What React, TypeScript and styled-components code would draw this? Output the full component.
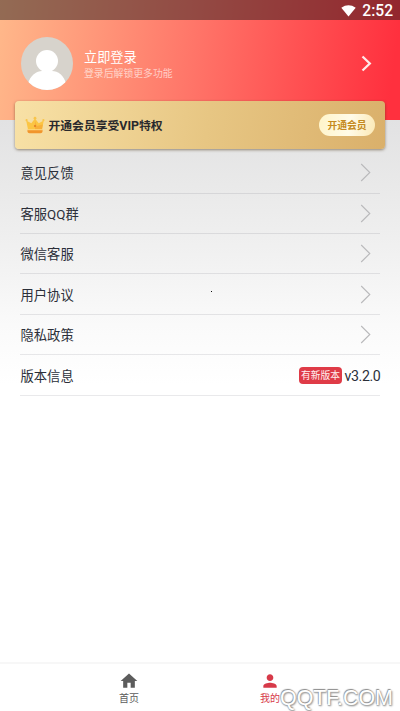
import React from "react";
import styled, { createGlobalStyle } from "styled-components";

const Global = createGlobalStyle`
  * { box-sizing: border-box; }
  body { margin: 0; background: #fff; font-family: Roboto, "Noto Sans CJK SC", sans-serif; }
`;

const Page = styled.div`
  position: relative;
  width: 400px;
  height: 711px;
  overflow: hidden;
  display: flex;
  flex-direction: column;
  background: linear-gradient(180deg, #e2e2e3 120px, #e9e9e9 185px, #f1f1f1 255px, #fafafa 325px, #fff 385px);
`;

const Header = styled.header`
  height: 120px;
  flex: none;
  background: linear-gradient(97deg, #ffb88a 0%, #ff7468 49%, #ff303e 97%);
`;

const StatusBar = styled.div`
  height: 20px;
  display: flex;
  align-items: center;
  justify-content: flex-end;
  gap: 6px;
  padding: 3px 7px 0 0;
  background: rgba(40, 30, 30, 0.5);
  color: #fff;
  font-size: 15.6px;
  font-weight: 500;
  line-height: 17px;

  svg {
    margin-top: -2px;
  }
`;

const Profile = styled.div`
  display: flex;
  align-items: center;
  height: 87px;
  padding: 0 28px 0 21px;
`;

const Greeting = styled.div`
  flex: 1;
  margin-left: 11px;
  color: #fff;
`;

const LoginTitle = styled.div`
  font-size: 13.2px;
  line-height: 18px;
  margin-top: 2px;
`;

const LoginHint = styled.div`
  font-size: 9.85px;
  line-height: 14px;
  color: rgba(255, 255, 255, 0.62);
`;

const VipCard = styled.section`
  height: 48px;
  flex: none;
  margin: -19px 15px 0;
  padding: 0 10px;
  display: flex;
  align-items: center;
  border-radius: 4px;
  background: linear-gradient(98deg, #f8e1a6 0%, #e7c683 52%, #dab06b 100%);
  box-shadow: 0 1px 3px rgba(70, 50, 20, 0.55);
`;

const VipText = styled.div`
  flex: 1;
  margin: -2px 0 0 3.5px;
  font-size: 11.8px;
  font-weight: 700;
  color: #29292d;
`;

const VipLatin = styled.span`
  font-size: 12.4px;
`;

const VipButton = styled.button`
  width: 56px;
  height: 22px;
  padding: 0;
  border: 0;
  border-radius: 11px;
  background: linear-gradient(100deg, #fff4c9, #fffbe8 55%, #fbe8b5);
  color: #c58a20;
  font: 700 9.8px/23px Roboto, "Noto Sans CJK SC", sans-serif;
`;

const Menu = styled.main`
  flex: 1;
  padding: 4.1px 20px 0;
`;

const Row = styled.div`
  height: 40.45px;
  display: flex;
  align-items: center;
  border-bottom: 1px solid rgba(40, 40, 60, 0.1);
  color: #2b2f39;
  font-size: 13.3px;
`;

const RowLabel = styled.span`
  flex: 1;
  margin-left: 0.5px;
`;

const RowArrow = styled.svg`
  margin-right: 9px;
`;

const UpdateTag = styled.span`
  width: 43px;
  height: 17px;
  margin-right: 2.5px;
  border-radius: 4px;
  background: #df3b47;
  color: #fff0f0;
  font-size: 9.8px;
  line-height: 18px;
  text-align: center;
`;

const Version = styled.span`
  width: 35.5px;
  padding-top: 1px;
  font-size: 14.2px;
  letter-spacing: -0.4px;
`;

const TabBar = styled.nav`
  height: 49px;
  flex: none;
  display: flex;
  justify-content: center;
  border-top: 2px solid #f7f7f7;
  background: #fff;
`;

const Tab = styled.div<{ $active?: boolean }>`
  width: 141px;
  padding: 7px 1px 0 0;
  display: flex;
  flex-direction: column;
  align-items: center;
  color: ${(p) => (p.$active ? "#d73a49" : "#5c5c5c")};
  font-size: 10px;
  line-height: 16px;

  svg {
    flex: none;
  }
`;

const Watermark = styled.div`
  position: absolute;
  left: 280px;
  top: 686px;
  font: 21.4px/24px "Liberation Sans", sans-serif;
  color: #fff;
  text-shadow: -0.5px -1px 1px #888, 0 1px 1px #aaa, 1px 1px 2px #888;
  white-space: nowrap;
`;

const Speck = styled.i`
  position: absolute;
  left: 211px;
  top: 291px;
  width: 1px;
  height: 1px;
  background: #111;
`;

const Avatar = () => (
  <svg width="52" height="53" viewBox="0 0 52 53">
    <defs>
      <clipPath id="avatar">
        <ellipse cx="26" cy="26.5" rx="26" ry="26.5" />
      </clipPath>
    </defs>
    <g clipPath="url(#avatar)">
      <rect width="52" height="53" fill="#d7d3cc" />
      <circle cx="26" cy="24" r="11" fill="#fff" />
      <path d="M7 53V47C9 38 16 34 21 34H31C37 34 43 38 45 47V53Z" fill="#fff" />
    </g>
  </svg>
);

const Crown = () => (
  <svg width="20" height="20" viewBox="0 0 20 20">
    <path d="M1.2 5.5L6.3 8.2L10 3.5L13.7 8.2L18.8 5.5L16.8 15.5H3.2Z" fill="#fbc544" />
    <path d="M10 6L11.8 11L17.8 9.5L16.8 15.5H10Z" fill="#f8b039" />
    <path d="M2.5 14.8H17.5V16.5Q17.5 18.2 15.5 18.2H4.5Q2.5 18.2 2.5 16.5Z" fill="#f1952d" />
    <path d="M3 14.3H17V15.2H3Z" fill="#ffe08a" />
    <circle cx="10" cy="3.2" r="1.4" fill="#f9c54b" />
    <circle cx="1.6" cy="5.2" r="1.1" fill="#f9c54b" />
    <circle cx="18.4" cy="5.2" r="1.1" fill="#f9c54b" />
    <path d="M10 9.7L11.1 11L10 12.3L8.9 11Z" fill="#dd6e22" />
  </svg>
);

const items = ["意见反馈", "客服QQ群", "微信客服", "用户协议", "隐私政策"];

export default function App() {
  return (
    <Page>
      <Global />
      <Header>
        <StatusBar>
          <svg width="15" height="12" viewBox="0 0 15 12">
            <path d="M.3 2.7Q7.5-2 14.7 2.7L7.5 11.5Z" fill="#fff" />
          </svg>
          <span>2:52</span>
        </StatusBar>
        <Profile>
          <Avatar />
          <Greeting>
            <LoginTitle>立即登录</LoginTitle>
            <LoginHint>登录后解锁更多功能</LoginHint>
          </Greeting>
          <svg width="11" height="17" viewBox="0 0 11 17">
            <path d="M1.5 1.5L8.8 8.5L1.5 15.5" fill="none" stroke="#ffe9e9" strokeWidth="2.3" />
          </svg>
        </Profile>
      </Header>
      <VipCard>
        <Crown />
        <VipText>
          开通会员享受<VipLatin>VIP</VipLatin>特权
        </VipText>
        <VipButton>开通会员</VipButton>
      </VipCard>
      <Menu>
        {items.map((label) => (
          <Row key={label}>
            <RowLabel>{label}</RowLabel>
            <RowArrow width="11" height="19" viewBox="0 0 11 19">
              <path d="M1.2 1L9.8 9.5L1.2 18" fill="none" stroke="#b9b9bb" strokeWidth="1.1" />
            </RowArrow>
          </Row>
        ))}
        <Row>
          <RowLabel>版本信息</RowLabel>
          <UpdateTag>有新版本</UpdateTag>
          <Version>v3.2.0</Version>
        </Row>
      </Menu>
      <TabBar>
        <Tab>
          <svg width="20" height="20" viewBox="0 0 24 24">
            <path d="M10 20v-6h4v6h5v-8h3L12 3 2 12h3v8z" fill="currentColor" />
          </svg>
          首页
        </Tab>
        <Tab $active>
          <svg width="20" height="20" viewBox="0 0 24 24">
            <path
              d="M12 12c2.2 0 4-1.8 4-4s-1.8-4-4-4-4 1.8-4 4 1.8 4 4 4zm0 2c-2.7 0-8 1.3-8 4v2h16v-2c0-2.7-5.3-4-8-4z"
              fill="currentColor"
            />
          </svg>
          我的
        </Tab>
      </TabBar>
      <Speck />
      <Watermark>QQTF.COM</Watermark>
    </Page>
  );
}
